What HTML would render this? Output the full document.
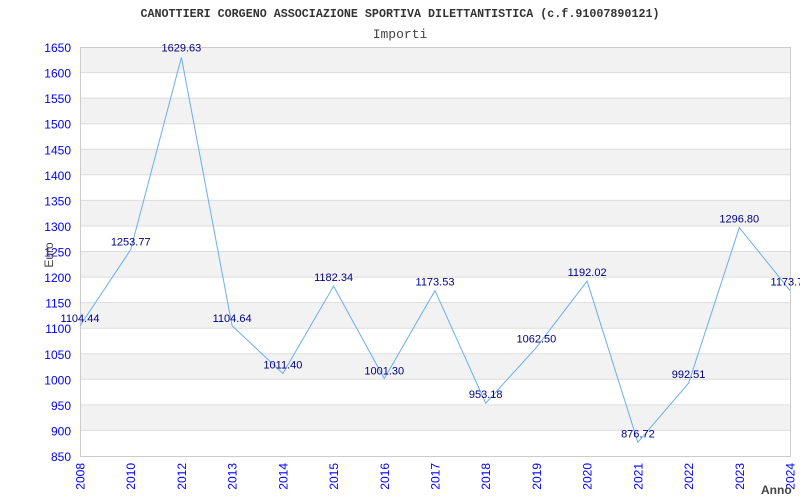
<!DOCTYPE html>
<html><head><meta charset="utf-8"><style>body{margin:0;background:#fff}svg{display:block}</style></head><body>
<svg width="800" height="500" xmlns="http://www.w3.org/2000/svg">
<text x="400" y="17" text-anchor="middle" font-family="Liberation Mono,monospace" font-weight="bold" font-size="11.7" fill="#333">CANOTTIERI CORGENO ASSOCIAZIONE SPORTIVA DILETTANTISTICA (c.f.91007890121)</text>
<text x="400" y="38" text-anchor="middle" font-family="Liberation Mono,monospace" font-size="13" fill="#444">Importi</text>
<g fill="#f2f2f2">
<rect x="80" y="47" width="710" height="25.6"/><rect x="80" y="98.1" width="710" height="25.6"/><rect x="80" y="149.3" width="710" height="25.6"/><rect x="80" y="200.4" width="710" height="25.6"/><rect x="80" y="251.5" width="710" height="25.6"/><rect x="80" y="302.6" width="710" height="25.6"/><rect x="80" y="353.8" width="710" height="25.6"/><rect x="80" y="404.9" width="710" height="25.6"/>
</g>
<g stroke="#ddd" stroke-width="1">
<path d="M80 72.6H790M80 98.1H790M80 123.7H790M80 149.3H790M80 174.8H790M80 200.4H790M80 226H790M80 251.5H790M80 277.1H790M80 302.6H790M80 328.2H790M80 353.8H790M80 379.3H790M80 404.9H790M80 430.4H790"/>
<rect x="80.5" y="47.5" width="710" height="409" fill="none" stroke="#ccc"/>
</g>
<g font-family="Liberation Sans,sans-serif" font-size="12" fill="#0000ff" text-anchor="end">
<text x="71" y="52">1650</text><text x="71" y="77.6">1600</text><text x="71" y="103.1">1550</text><text x="71" y="128.7">1500</text><text x="71" y="154.3">1450</text><text x="71" y="179.8">1400</text><text x="71" y="205.4">1350</text><text x="71" y="231">1300</text><text x="71" y="256.5">1250</text><text x="71" y="282.1">1200</text><text x="71" y="307.6">1150</text><text x="71" y="333.2">1100</text><text x="71" y="358.8">1050</text><text x="71" y="384.3">1000</text><text x="71" y="409.9">950</text><text x="71" y="435.4">900</text><text x="71" y="461">850</text>
</g>
<g font-family="Liberation Sans,sans-serif" font-size="12" fill="#0000ff" text-anchor="end">
<text transform="translate(84.5,463) rotate(-90)">2008</text>
<text transform="translate(135.2,463) rotate(-90)">2010</text>
<text transform="translate(185.9,463) rotate(-90)">2012</text>
<text transform="translate(236.6,463) rotate(-90)">2013</text>
<text transform="translate(287.4,463) rotate(-90)">2014</text>
<text transform="translate(338.1,463) rotate(-90)">2015</text>
<text transform="translate(388.8,463) rotate(-90)">2016</text>
<text transform="translate(439.5,463) rotate(-90)">2017</text>
<text transform="translate(490.2,463) rotate(-90)">2018</text>
<text transform="translate(540.9,463) rotate(-90)">2019</text>
<text transform="translate(591.6,463) rotate(-90)">2020</text>
<text transform="translate(642.4,463) rotate(-90)">2021</text>
<text transform="translate(693.1,463) rotate(-90)">2022</text>
<text transform="translate(743.8,463) rotate(-90)">2023</text>
<text transform="translate(794.5,463) rotate(-90)">2024</text>
</g>
<text transform="translate(53,255) rotate(-90)" text-anchor="middle" font-family="Liberation Sans,sans-serif" font-size="12" fill="#444">Euro</text>
<text x="761" y="494" font-family="Liberation Sans,sans-serif" font-weight="bold" font-size="12" fill="#444">Anno</text>
<polyline fill="none" stroke="#6aaef0" stroke-width="1" points="80,325.9 130.7,249.6 181.4,57.4 232.1,325.8 282.9,373.5 333.6,286.1 384.3,378.6 435,290.6 485.7,403.2 536.4,347.4 587.1,281.1 637.9,442.3 688.6,383.1 739.3,227.6 790,290.5"/>
<g font-family="Liberation Sans,sans-serif" font-size="11" fill="#000080" text-anchor="middle">
<text x="80" y="321.9">1104.44</text><text x="130.7" y="245.6">1253.77</text><text x="181.4" y="51.4">1629.63</text><text x="232.1" y="321.8">1104.64</text><text x="282.9" y="368.5">1011.40</text><text x="333.6" y="281.1">1182.34</text><text x="384.3" y="374.6">1001.30</text><text x="435" y="285.6">1173.53</text><text x="485.7" y="398.2">953.18</text><text x="536.4" y="342.4">1062.50</text><text x="587.1" y="276.1">1192.02</text><text x="637.9" y="437.3">876.72</text><text x="688.6" y="378.1">992.51</text><text x="739.3" y="222.6">1296.80</text><text x="790" y="285.5">1173.70</text>
</g>
</svg>
</body></html>
